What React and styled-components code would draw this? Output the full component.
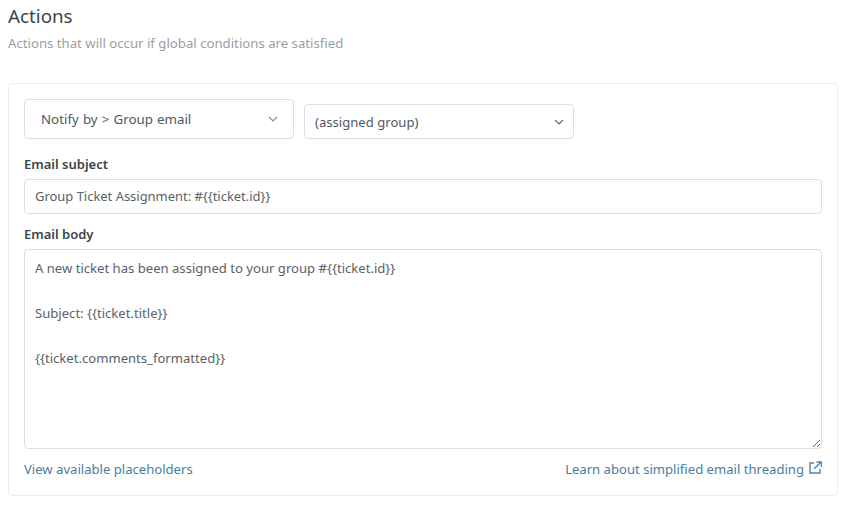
import React from "react";
import styled, { createGlobalStyle } from "styled-components";

const GlobalStyle = createGlobalStyle`
  html, body {
    margin: 0;
    padding: 0;
    background: #fff;
  }
  body {
    font-family: "Noto Sans", "Open Sans", sans-serif;
    color: #444c52;
  }
`;

const Chevron = ({ color }) => (
  <svg width="10" height="6" viewBox="0 0 10 6" fill="none">
    <path d="M1 1l4 4 4-4" stroke={color} strokeWidth="1.2" />
  </svg>
);

const ExternalIcon = () => (
  <LinkIcon width="13" height="13" viewBox="0 0 13 13" fill="none" stroke="#4a87b5" strokeWidth="1.4">
    <path d="M5 2H1v10h10V8" />
    <path d="M5.2 7.8L11.6 1.4M7.4 1h5v5" />
  </LinkIcon>
);

function App() {
  return (
    <Page>
      <GlobalStyle />
      <Title>Actions</Title>
      <Subtitle>Actions that will occur if global conditions are satisfied</Subtitle>
      <Card>
        <SelectRow>
          <Select $tall>
            Notify by &gt; Group email
            <Chevron color="#8a9197" />
          </Select>
          <Select>
            (assigned group)
            <Chevron color="#5f676d" />
          </Select>
        </SelectRow>
        <Label>Email subject</Label>
        <TextInput readOnly value="Group Ticket Assignment: #{{ticket.id}}" />
        <Label>Email body</Label>
        <TextArea
          readOnly
          value={"A new ticket has been assigned to your group #{{ticket.id}}\n\nSubject: {{ticket.title}}\n\n{{ticket.comments_formatted}}"}
        />
        <Links>
          <Link>View available placeholders</Link>
          <Link>
            Learn about simplified email threading
            <ExternalIcon />
          </Link>
        </Links>
      </Card>
    </Page>
  );
}

const Page = styled.div`
  width: 845px;
  height: 508px;
  box-sizing: border-box;
  padding: 3px 7px 0 8px;
  overflow: hidden;
`;

const Title = styled.h1`
  margin: 0;
  font-size: 18.8px;
  font-weight: 400;
  line-height: 26px;
  color: #3d4448;
`;

const Subtitle = styled.p`
  margin: 4px 0 0;
  font-size: 13.2px;
  line-height: 20px;
  color: #9a9fa3;
`;

const Card = styled.div`
  margin-top: 30px;
  box-sizing: border-box;
  height: 413px;
  padding: 15px 15px 0;
  border: 1px solid #ebedee;
  border-radius: 4px;
`;

const SelectRow = styled.div`
  display: flex;
  align-items: flex-end;
  gap: 10px;
  margin-bottom: 16px;
`;

const Select = styled.div`
  box-sizing: border-box;
  width: 270px;
  height: ${(props) => (props.$tall ? "40px" : "35px")};
  padding: ${(props) => (props.$tall ? "0 15px 0 16px" : "0 9px 0 10px")};
  display: flex;
  align-items: center;
  justify-content: space-between;
  background: #fff;
  border: 1px solid #dcdfe1;
  border-radius: 4px;
  font-size: ${(props) => (props.$tall ? "13.3px" : "13.1px")};
  word-spacing: ${(props) => (props.$tall ? "0.7px" : "0")};
  color: #50585e;
`;

const Label = styled.label`
  display: block;
  margin: 0 0 6px;
  font-size: 13px;
  line-height: 18px;
  font-weight: 600;
  color: #3d4448;
`;

const TextInput = styled.input`
  display: block;
  box-sizing: border-box;
  width: 798px;
  height: 35px;
  margin-bottom: 11px;
  padding: 0 10px 2px;
  border: 1px solid #dcdfe1;
  border-radius: 4px;
  outline: none;
  font-family: inherit;
  font-size: 12.95px;
  color: #5a6268;
`;

const TextArea = styled.textarea`
  display: block;
  box-sizing: border-box;
  width: 798px;
  height: 200px;
  padding: 7px 10px;
  border: 1px solid #dcdfe1;
  border-radius: 4px;
  outline: none;
  resize: vertical;
  font-family: inherit;
  font-size: 13.1px;
  line-height: 22.5px;
  color: #5a6268;
`;

const Links = styled.div`
  display: flex;
  justify-content: space-between;
  margin-top: 11px;
`;

const Link = styled.a`
  display: flex;
  align-items: center;
  gap: 5px;
  font-size: 13.1px;
  line-height: 18px;
  color: #4a7da3;
`;

const LinkIcon = styled.svg`
  margin-top: -3px;
`;

export default App;
